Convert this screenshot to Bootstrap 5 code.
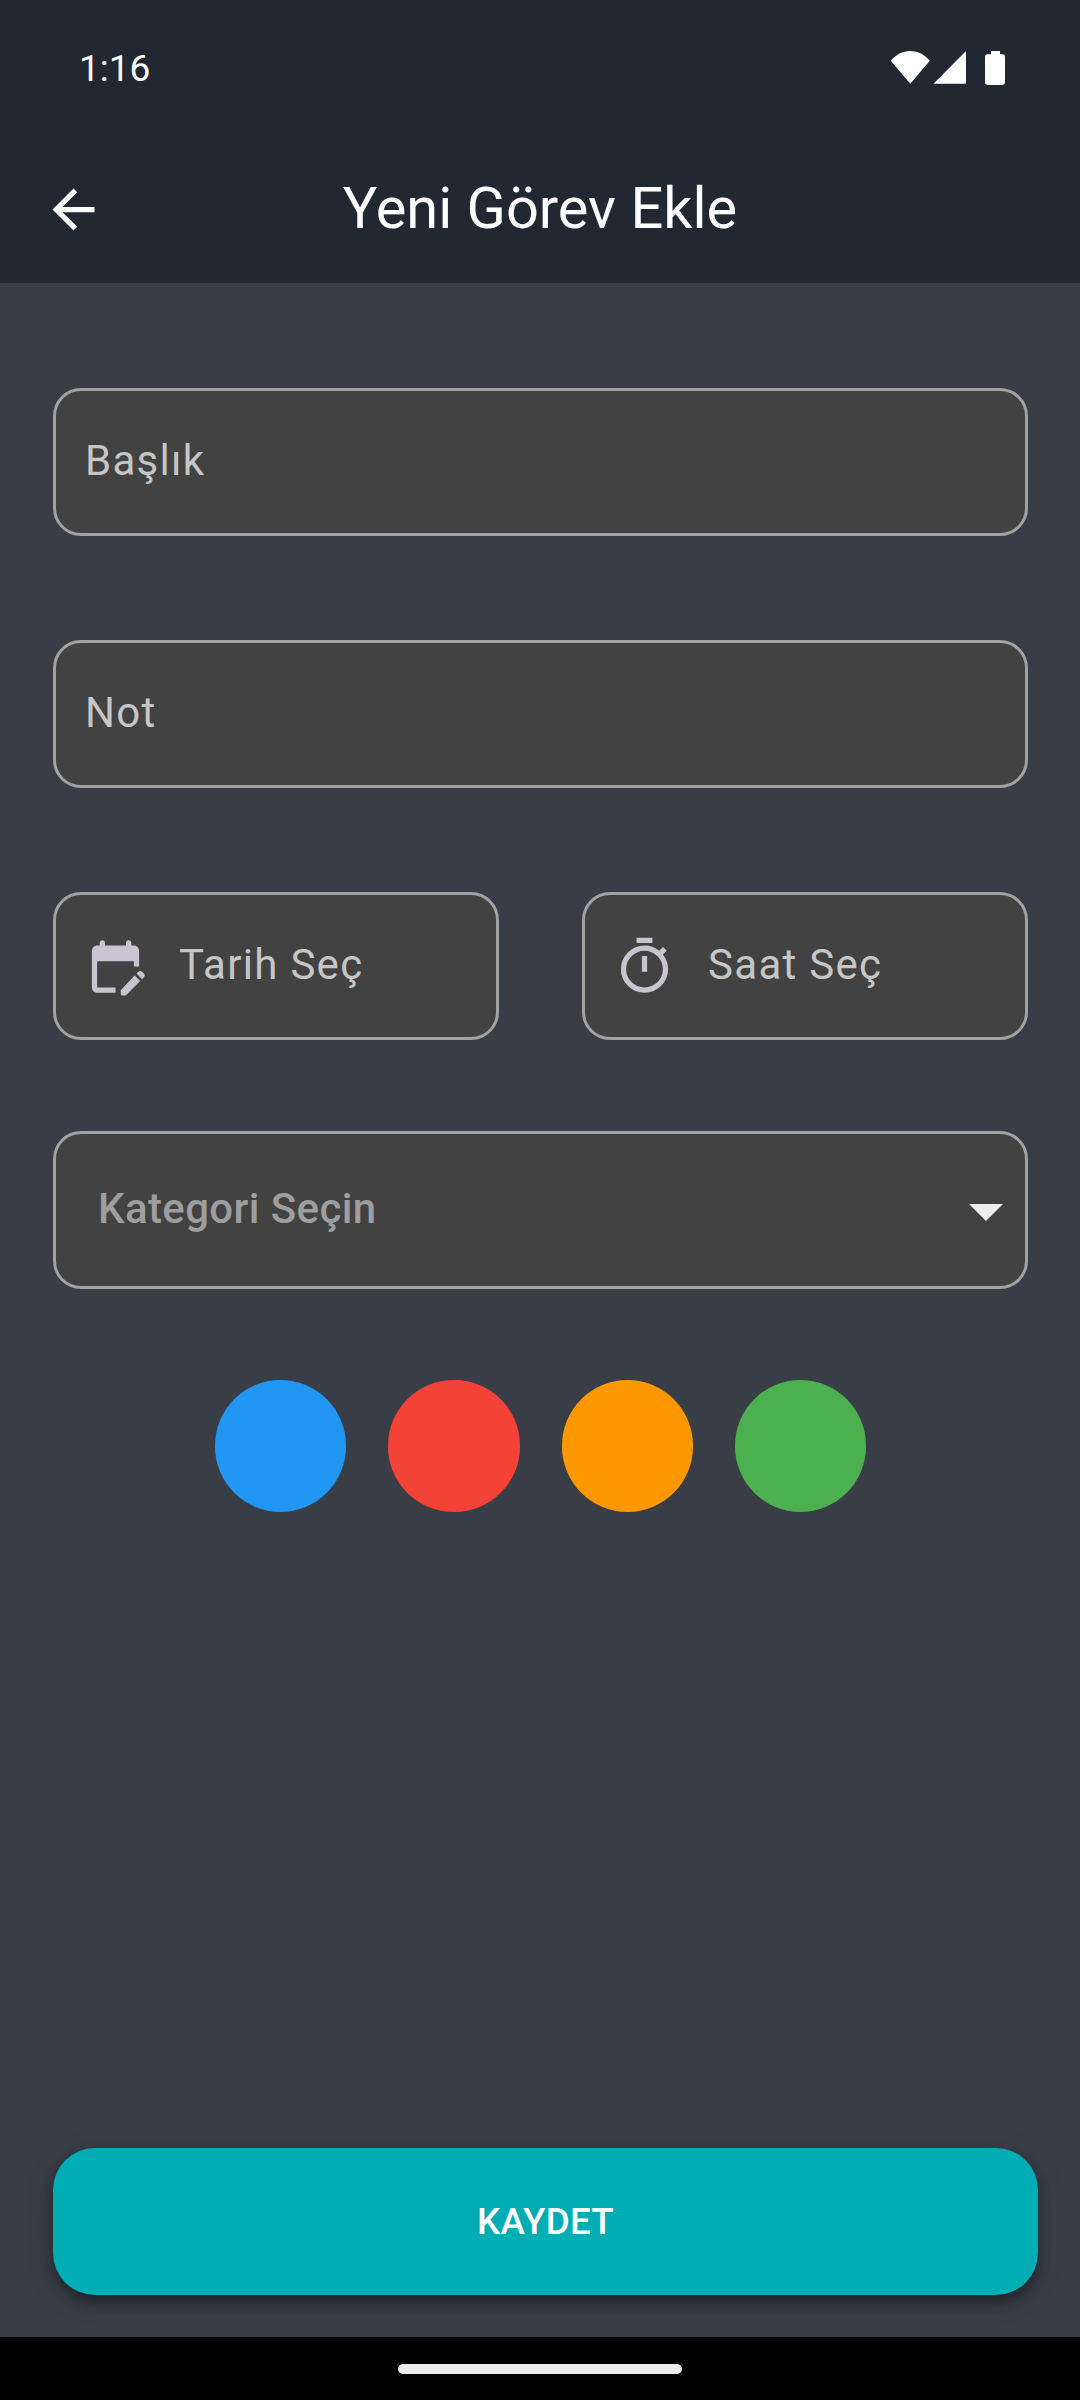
<!DOCTYPE html>
<html lang="tr">
<head>
<meta charset="utf-8">
<meta name="viewport" content="width=device-width, initial-scale=1">
<title>Yeni Görev Ekle</title>
<link href="https://cdn.jsdelivr.net/npm/bootstrap@5.3.0/dist/css/bootstrap.min.css" rel="stylesheet">
<style>
  body { background: #393e46; font-family: Roboto, "Noto Sans", sans-serif; }
  .screen { width: 1080px; height: 2400px; }
  .app-head { background: #222831; height: 283px; }
  .status-bar { height: 136px; padding: 0 75px 0 79px; }
  .clock { font-size: 37px; line-height: 44px; padding-top: 2px; }
  .title-bar { height: 147px; padding: 0 42px; }
  .title-text { font-size: 57.75px; line-height: 72px; padding-bottom: 3px; }
  .ico { width: 63px; height: 63px; display: block; flex: none; }
  .form-area { padding: 105px 52px 0 53px; }
  .field { height: 148px; border: 3px solid #a2a2a2; border-radius: 28px; background: #424242; color: #c6c6c6; font-size: 42px; line-height: 48px; letter-spacing: 1.3px; }
  .field-text { padding: 0 0 3px 29px; }
  .field-icon { padding-left: 28px; gap: 32px; color: #cac4d0; }
  .field-icon span { color: #c6c6c6; padding-bottom: 3px; }
  .field + .field, .split { margin-top: 104px; }
  .split { display: grid; grid-template-columns: 446px 446px; justify-content: space-between; }
  .picker { height: 158px; margin-top: 91px; padding: 0 22px 3px 42px; color: #9e9e9e; font-weight: 500; letter-spacing: .38px; }
  .caret { width: 34px; height: 17px; margin-top: 7px; }
  .swatches { gap: 42px; margin: 91.3px 0 0; }
  .swatch { width: 131.25px; height: 131.25px; }
  .save { height: 147px; margin: auto 42px 42px 53px; border: 0; border-radius: 42px; background: #00adb5; font-size: 36.75px; font-weight: 500; letter-spacing: .26px; line-height: 48px; padding: 1px 0 0; box-shadow: 0 8px 13px -3px rgba(0,0,0,.25), 0 8px 14px rgba(0,0,0,.18), 0 5px 30px rgba(0,0,0,.12); }
  .nav-strip { height: 63px; z-index: 1; }
  .handle { width: 284px; height: 10px; border-radius: 5px; background: #ececec; margin-top: 1px; }
</style>
</head>
<body>
<div class="screen d-flex flex-column overflow-hidden">
  <header class="app-head text-white flex-shrink-0">
    <div class="status-bar d-flex align-items-center justify-content-between">
      <span class="clock">1:16</span>
      <svg width="115" height="34" viewBox="0 0 115 34" fill="#fff" aria-hidden="true">
        <path d="M.8 9.700C6 3.700 12.500 0 20.300 0s14.300 3.700 19.500 9.700L20.300 32.700z"/>
        <path d="M43.500 32.700 76 0v32.700z"/>
        <path d="M101 3.300V0h9v3.300h2.600q2.400 0 2.400 2.400v25.900q0 2.400-2.400 2.400H97.400q-2.400 0-2.400-2.400V5.700q0-2.400 2.400-2.400z"/>
      </svg>
    </div>
    <div class="title-bar d-flex align-items-center justify-content-between">
      <svg class="ico" viewBox="0 0 24 24" fill="#fff" aria-hidden="true"><path d="M20 11H7.830l5.590-5.590L12 4l-8 8 8 8 1.410-1.410L7.830 13H20z"/></svg>
      <span class="title-text">Yeni Görev Ekle</span>
      <span class="ico"></span>
    </div>
  </header>

  <main class="d-flex flex-column flex-grow-1">
    <div class="form-area">
      <div class="field field-text d-flex align-items-center">Başlık</div>
      <div class="field field-text d-flex align-items-center">Not</div>
      <div class="split">
        <div class="field field-icon d-flex align-items-center m-0">
          <svg class="ico" viewBox="0 0 24 24" fill="currentColor" aria-hidden="true">
            <path d="M5 22c-1.100 0-2-.9-2-2V6c0-1.100.9-2 2-2h1V3a1 1 0 0 1 2 0v1h8V3a1 1 0 0 1 2 0v1h1c1.100 0 2 .9 2 2v6h-2v-2H5v10h7v2z"/>
            <path d="m22.840 16.110-.71.71-2.120-2.120.71-.71c.39-.39 1.020-.39 1.410 0l.71.71c.39.39.39 1.020 0 1.410zM19.300 15.410l2.120 2.120-5.320 5.320c-.09.1-.22.15-.35.15H14.500c-.28 0-.5-.22-.5-.5v-1.250c0-.13.05-.26.15-.35z"/>
          </svg>
          <span>Tarih Seç</span>
        </div>
        <div class="field field-icon d-flex align-items-center m-0">
          <svg class="ico" viewBox="0 0 24 24" fill="currentColor" aria-hidden="true">
            <path d="M15 1H9v2h6zM11 14h2V8h-2zM19.030 7.390l1.420-1.420c-.43-.51-.9-.99-1.410-1.410l-1.420 1.420A8.960 8.960 0 0 0 12 4a9 9 0 1 0 9 9c0-2.120-.74-4.070-1.970-5.610zM12 20a7 7 0 1 1 0-14 7 7 0 0 1 0 14z"/>
          </svg>
          <span>Saat Seç</span>
        </div>
      </div>
      <div class="field picker d-flex align-items-center justify-content-between">
        <span>Kategori Seçin</span>
        <svg class="caret" viewBox="0 0 34 17" fill="#eee" aria-hidden="true"><path d="M0 0h34L17 17z"/></svg>
      </div>
      <div class="swatches d-flex justify-content-center">
        <div class="swatch rounded-circle" style="background:#2196f3"></div>
        <div class="swatch rounded-circle" style="background:#f44336"></div>
        <div class="swatch rounded-circle" style="background:#ff9800"></div>
        <div class="swatch rounded-circle" style="background:#4caf50"></div>
      </div>
    </div>
    <button type="button" class="save btn text-white">KAYDET</button>
  </main>

  <div class="nav-strip bg-black position-relative d-flex align-items-center justify-content-center flex-shrink-0">
    <div class="handle"></div>
  </div>
</div>
<script src="https://cdn.jsdelivr.net/npm/bootstrap@5.3.0/dist/js/bootstrap.bundle.min.js"></script>
</body>
</html>
